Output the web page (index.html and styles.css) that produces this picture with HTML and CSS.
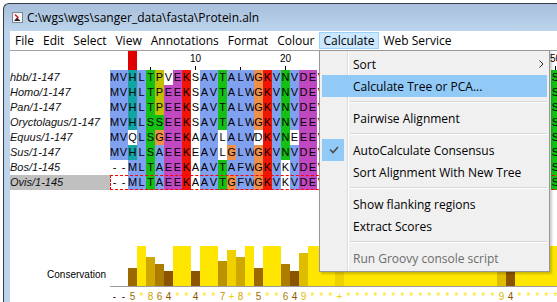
FILE: index.html
```html
<!DOCTYPE html>
<html lang="en">
<head>
    <meta charset="UTF-8">
    <title>Protein.aln</title>
    <link rel="stylesheet" href="styles.css">
</head>
<body>
    <div class="window">
        <div class="titlebar">
            <svg class="app-icon" width="11" height="11" viewBox="0 0 11 11">
                <rect x="0.5" y="0.5" width="10" height="10" fill="#f6f6f6" stroke="#7d8590"/>
                <path d="M2 9 L5 5.5 L8.5 9 Z" fill="#222"/>
                <path d="M3 2.5 L6.5 6" stroke="#d42020" stroke-width="1.6"/>
            </svg>
            <span class="title">C:\wgs\wgs\sanger_data\fasta\Protein.aln</span>
        </div>

        <div class="menubar">
            <span class="menu-item">File</span>
            <span class="menu-item">Edit</span>
            <span class="menu-item">Select</span>
            <span class="menu-item">View</span>
            <span class="menu-item">Annotations</span>
            <span class="menu-item">Format</span>
            <span class="menu-item">Colour</span>
            <span class="menu-item open">Calculate</span>
            <span class="menu-item">Web Service</span>
        </div>

        <div class="alignment">
            <div class="seq-area">
                <div class="ids">
                    <div class="ruler-space"></div>
                    <div class="id">hbb/1-147</div>
                    <div class="id">Homo/1-147</div>
                    <div class="id">Pan/1-147</div>
                    <div class="id">Oryctolagus/1-147</div>
                    <div class="id">Equus/1-147</div>
                    <div class="id">Sus/1-147</div>
                    <div class="id">Bos/1-145</div>
                    <div class="id selected">Ovis/1-145</div>
                </div>
                <div class="seqs">
                    <div class="ruler" id="ruler"></div>
                    <div id="rows"></div>
                </div>
            </div>
            <div class="annotation">
                <div class="annot-label">Conservation</div>
                <div class="annot-track">
                    <div class="conservation" id="bars"></div>
                    <div class="cons-text" id="symbols"></div>
                </div>
            </div>
        </div>
    </div>

    <div class="dropdown">
        <div class="mi">Sort
            <svg class="submenu-arrow" width="5" height="8" viewBox="0 0 5 8"><polyline points="0.5,0.5 4,4 0.5,7.5" fill="none" stroke="#222"/></svg>
        </div>
        <div class="mi hover">Calculate Tree or PCA...</div>
        <div class="sep"></div>
        <div class="mi">Pairwise Alignment</div>
        <div class="sep"></div>
        <div class="mi checked">
            <span class="checkbox">
                <svg width="22" height="22" viewBox="0 0 22 22"><polyline points="8,10.5 11,13.5 16,8" fill="none" stroke="#4a4a4a" stroke-width="1.6"/></svg>
            </span>AutoCalculate Consensus
        </div>
        <div class="mi">Sort Alignment With New Tree</div>
        <div class="sep"></div>
        <div class="mi">Show flanking regions</div>
        <div class="mi">Extract Scores</div>
        <div class="sep"></div>
        <div class="mi disabled">Run Groovy console script</div>
    </div>

    <script>
        const sequences = [
            'MVHLTPVEKSAVTALWGKVNVDEVGGEALGRLLVVYPWTQRFFESFGDLS',
            'MVHLTPEEKSAVTALWGKVNVDEVGGEALGRLLVVYPWTQRFFESFGDLS',
            'MVHLTPEEKSAVTALWGKVNVDEVGGEALGRLLVVYPWTQRFFESFGDLS',
            'MVHLSSEEKSAVTALWGKVNVEEVGGEALGRLLVVYPWTQRFFESFGDLS',
            'MVQLSGEEKAAVLALWDKVNEEEVGGEALGRLLIVYPWTQRFFDSFGDLS',
            'MVHLSAEEKEAVLGLWGKVNVDEVGGEALGRLLVVYPWTQRFFESFGDLS',
            '--MLTAEEKAAVTAFWGKVKVDEVGGEALGRLLVVYPWTQRFFESFGDLS',
            '--MLTAEEKAAVTGFWGKVKVDEVGGEALGRLLVVYPWTQRFFESFGDLS'
        ];

        // clustal colouring for the visible columns, one letter per residue
        const colours = [
            'bbcbgywmrwbbgbbborbgbmmw',
            'bbcbgymmrwbbgbbborbgbmmw',
            'bbcbgymmrwbbgbbborbgbmmw',
            'bbcbggmmrwbbgbbborbgbmmw',
            'bbwbgommrwbbwbbbwrbgwmmw',
            'bbcbgbmmrwbbwobborbgbmmw',
            'wwbbgbmmrwbbgbbborbwbmmw',
            'wwbbgbmmrwbbgobborbwbmmw'
        ];
        const classes = { b: 'hydrophobic', r: 'positive', m: 'negative', g: 'polar', o: 'glycine', y: 'proline', c: 'aromatic', w: '' };

        const conservation = '--5*864**4**7+8*5**649***+*****************94*****';

        const ruler = document.getElementById('ruler');
        for (let i = 1; i <= 50; i++) {
            const cell = document.createElement('div');
            cell.className = i === 3 ? 'ruler-col marked' : 'ruler-col';
            if (i % 10 === 0) {
                const num = document.createElement('span');
                num.className = 'num';
                num.textContent = i;
                cell.appendChild(num);
            }
            if (i % 5 === 0) {
                const tick = document.createElement('span');
                tick.className = i % 10 === 0 ? 'tick' : 'tick minor';
                cell.appendChild(tick);
            }
            ruler.appendChild(cell);
        }

        const rows = document.getElementById('rows');
        sequences.forEach((seq, r) => {
            const row = document.createElement('div');
            row.className = r === 7 ? 'row selected' : 'row';
            const scheme = colours[r].padEnd(49, 'w') + 'g';
            for (let i = 0; i < seq.length; i++) {
                const res = document.createElement('span');
                res.className = ('res ' + classes[scheme[i]]).trim();
                res.textContent = seq[i];
                row.appendChild(res);
            }
            rows.appendChild(row);
        });

        function consValue(ch) {
            if (ch === '*') return 11;
            if (ch === '+') return 10;
            if (ch === '-') return 0;
            return Number(ch);
        }

        function consColour(v) {
            return 'rgb(' + Math.round(74 + v * 16.45) + ',' + Math.round(v * 20.9) + ',0)';
        }

        const bars = document.getElementById('bars');
        const symbols = document.getElementById('symbols');
        for (const ch of conservation) {
            const v = consValue(ch);
            const bar = document.createElement('div');
            bar.className = 'bar';
            bar.style.height = Math.round(v * 40 / 11) + 'px';
            bar.style.background = consColour(v);
            bars.appendChild(bar);

            const sym = document.createElement('span');
            sym.className = 'sym';
            sym.style.color = consColour(v);
            sym.textContent = ch;
            symbols.appendChild(sym);
        }
    </script>
</body>
</html>
```

FILE: styles.css
```css
body {
    margin: 0;
    background-color: #fff;
    color: #000;
    overflow: hidden;
    font-family: "Open Sans", sans-serif;
    font-size: 12px;
}

/* window frame */
.window {
    margin: 3px 0 0 3px;
    width: 600px;
    height: 298px;
    padding-left: 6px;
    border-top: 1px solid #343c46;
    border-left: 1px solid #343c46;
    border-top-left-radius: 6px;
    background: linear-gradient(#a8bfdb, #bcd4ec 27px);
    overflow: hidden;
}
.titlebar {
    height: 27px;
    display: flex;
    align-items: center;
}
.app-icon {
    margin-left: 2px;
}
.title {
    margin-left: 4px;
}

/* menu bar */
.menubar {
    height: 19px;
    box-sizing: border-box;
    padding-top: 1px;
    background: #fff;
    display: flex;
    align-items: flex-start;
}
.menu-item {
    height: 17px;
    box-sizing: border-box;
    padding: 0 3.5px 0 4px;
    border: 1px solid transparent;
    line-height: 15px;
    white-space: nowrap;
}
.menu-item + .menu-item {
    padding-left: 3.5px;
}
.menu-item.open {
    background: #cce8ff;
    border-color: #99d1ff;
}

/* alignment panel */
.alignment {
    height: 251px;
    background: #fff;
    border-top: 1px solid #a0a0a0;
    font-family: "Liberation Sans", Arial, sans-serif;
}
.seq-area {
    display: flex;
}
.ids {
    width: 100px;
    flex: none;
}
.ruler-space {
    height: 19px;
}
.id {
    height: 15px;
    line-height: 15px;
    font-size: 11px;
    font-style: italic;
    color: #111;
    white-space: nowrap;
}
.id.selected {
    background: #c0c0c0;
}

.seqs {
    flex: 1;
    overflow: hidden;
}
.ruler {
    display: flex;
    height: 19px;
}
.ruler-col {
    width: 9px;
    flex: none;
    display: flex;
    flex-direction: column;
    align-items: center;
    justify-content: flex-end;
}
.ruler-col.marked {
    background: #e00000;
}
.num {
    font-size: 10px;
    line-height: 10px;
    margin-bottom: 2px;
    white-space: nowrap;
}
.tick {
    width: 1px;
    height: 4px;
    background: #000;
}
.tick.minor {
    height: 3px;
}

.row {
    display: flex;
    height: 15px;
}
.row.selected {
    outline: 1px dashed #f00;
    outline-offset: -1px;
}
.res {
    width: 9px;
    flex: none;
    text-align: center;
    line-height: 15px;
    font-size: 11px;
}
.hydrophobic { background: #80a0f0; }
.positive { background: #f01505; }
.negative { background: #c048c0; }
.polar { background: #15c015; }
.glycine { background: #f09048; }
.proline { background: #c0c000; }
.aromatic { background: #15a4a4; }

/* conservation annotation row */
.annotation {
    display: flex;
    margin-top: 56px;
}
.annot-label {
    width: 100px;
    flex: none;
    box-sizing: border-box;
    padding: 23px 4px 0 0;
    text-align: right;
    font-size: 10px;
    line-height: 12px;
}
.annot-track {
    flex: 1;
    overflow: hidden;
}
.conservation {
    height: 40px;
    border-bottom: 1px solid #9a9a9a;
    display: flex;
    align-items: flex-end;
}
.bar {
    width: 9px;
    flex: none;
}
.cons-text {
    display: flex;
    padding-top: 2px;
}
.sym {
    width: 9px;
    flex: none;
    text-align: center;
    font-size: 10px;
    line-height: 15px;
}

/* open Calculate menu */
.dropdown {
    position: absolute;
    left: 319px;
    top: 50px;
    width: 231px;
    box-sizing: border-box;
    padding: 2px;
    border: 1px solid #979797;
    background: linear-gradient(to right, #f0f0f0 27px, #dcdcdc 27px, #dcdcdc 28px, #fff 28px, #fff 29px, #f0f0f0 29px);
    box-shadow: 2px 2px 2px rgba(0, 0, 0, 0.2);
}
.mi {
    height: 22px;
    display: flex;
    align-items: center;
    padding-left: 31px;
    white-space: nowrap;
}
.mi.hover {
    background: #91c9f7;
}
.mi.checked {
    padding-left: 0;
}
.mi.disabled {
    color: #6d6d6d;
}
.checkbox {
    width: 22px;
    height: 22px;
    margin-right: 9px;
    background: #91c9f7;
}
.submenu-arrow {
    margin-left: auto;
    margin-right: 3px;
}
.sep {
    height: 10px;
    box-sizing: border-box;
    padding-top: 4px;
    margin-left: 28px;
}
.sep::after {
    content: "";
    display: block;
    border-top: 1px solid #d7d7d7;
    border-bottom: 1px solid #fff;
}
```
